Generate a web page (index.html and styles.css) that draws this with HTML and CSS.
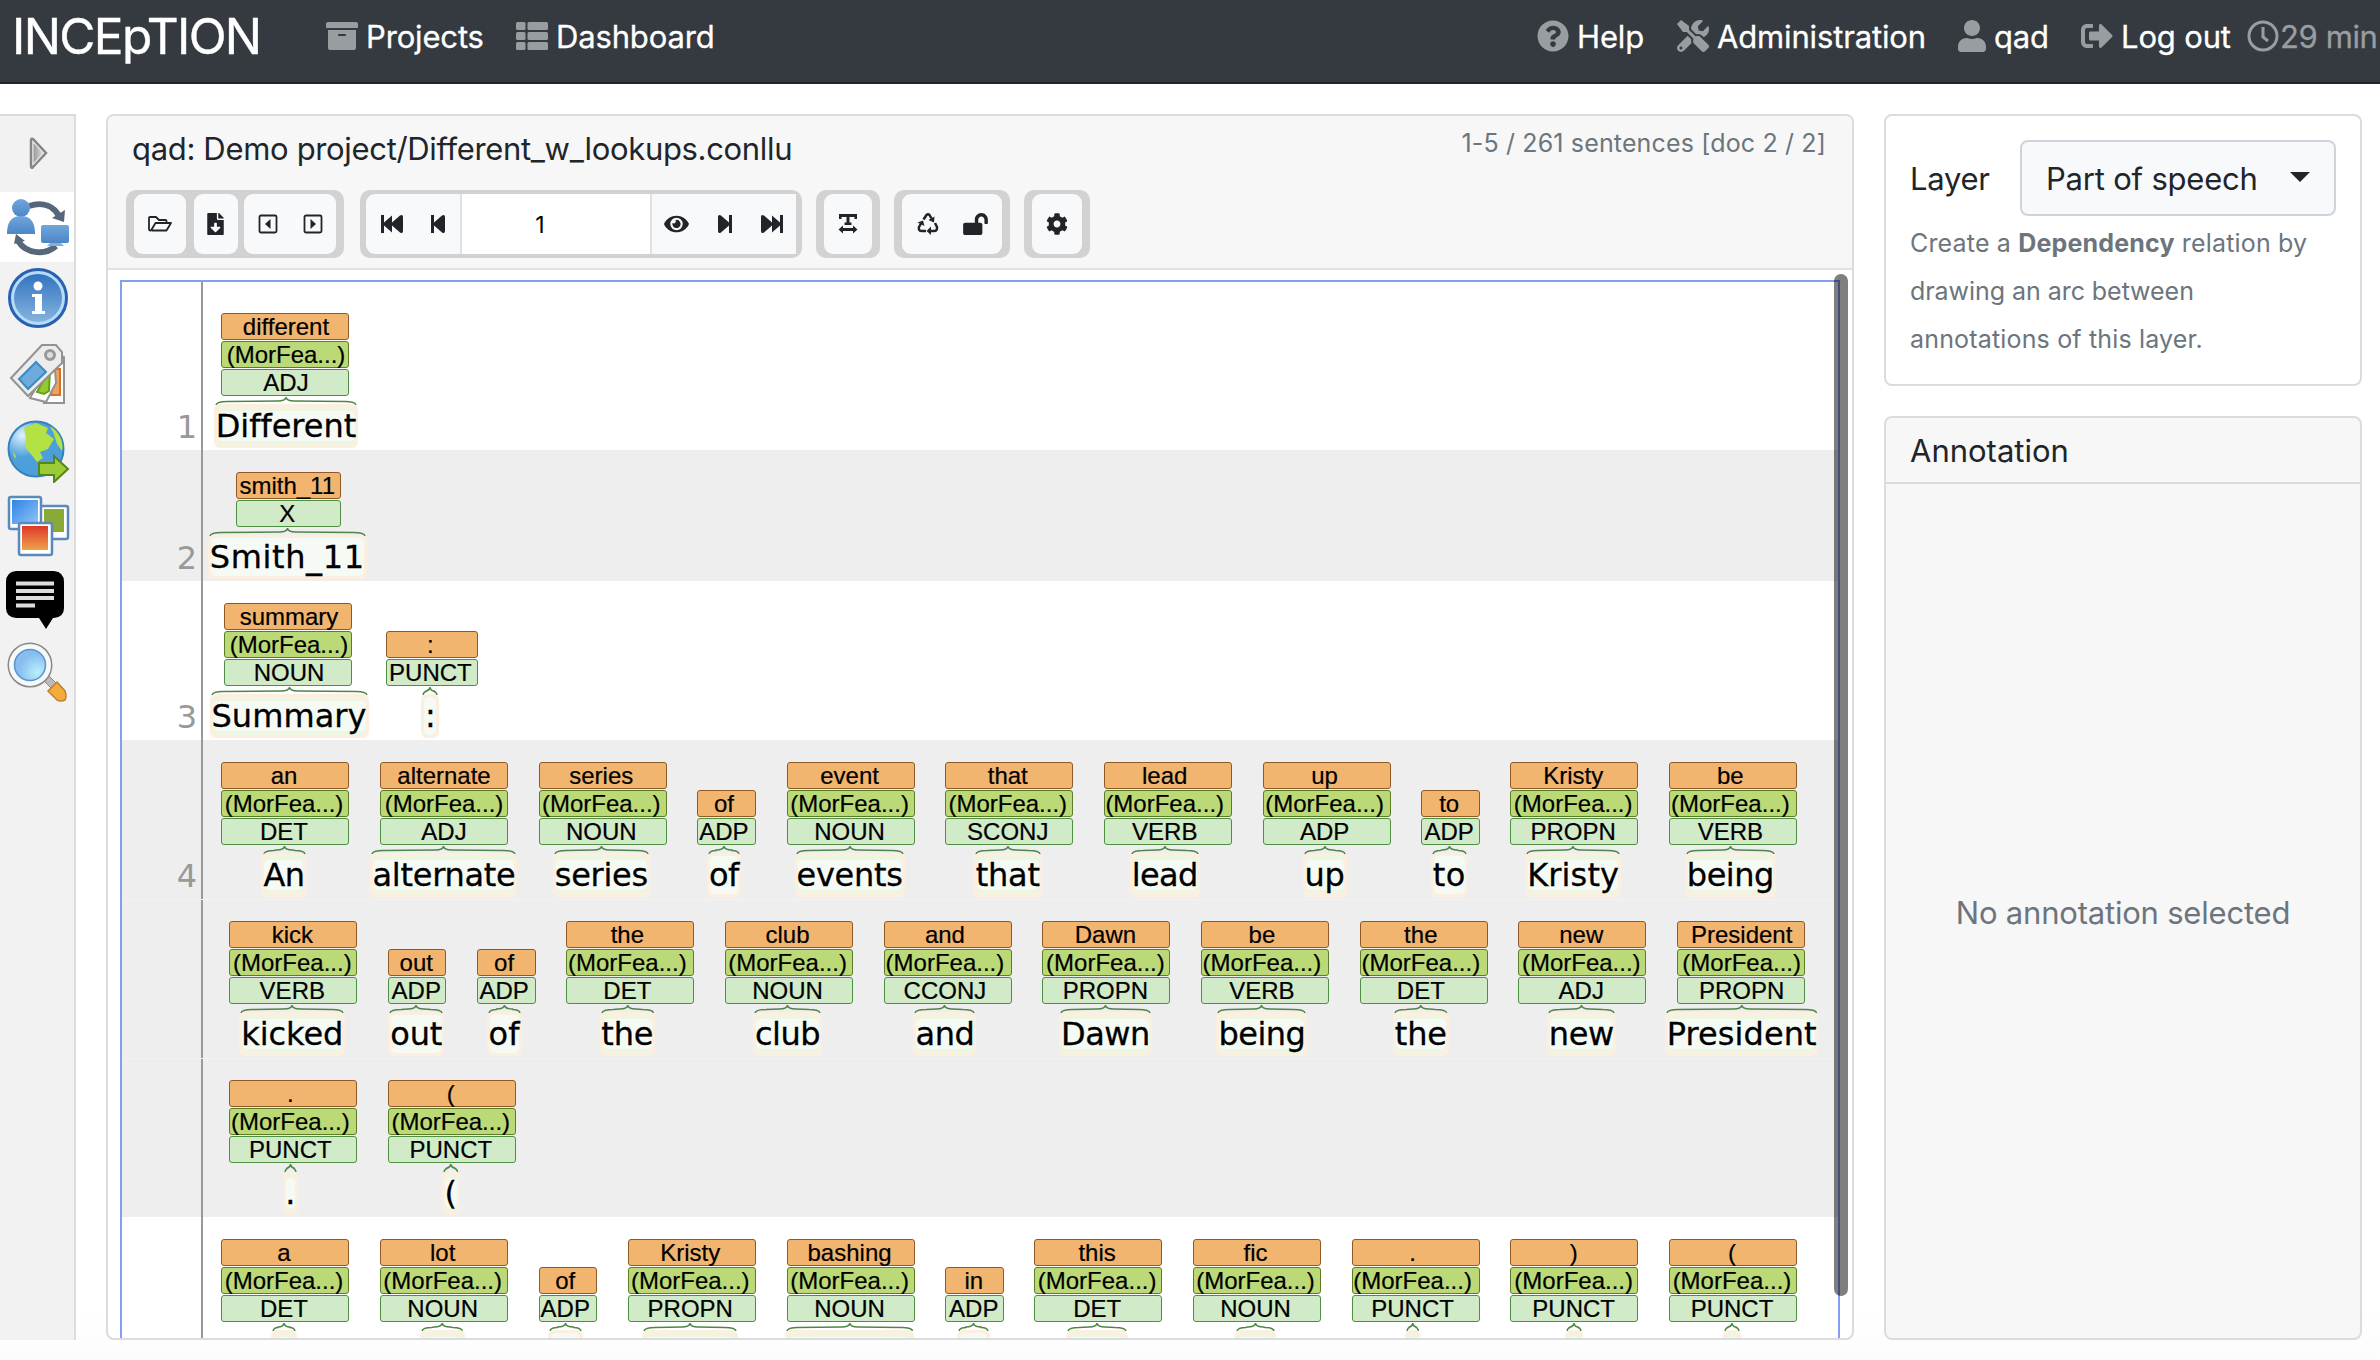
FILE: index.html
```html
<!DOCTYPE html>
<html lang="en">
<head>
<meta charset="utf-8">
<title>INCEpTION</title>
<link rel="stylesheet" href="styles.css">
</head>
<body>
<header class="navbar">
  <a class="brand">INCEpTION</a>
  <nav class="nav-main">
    <a class="nav-item projects"><svg width="32" height="32" viewBox="0 0 512 512"><path d="M32 448c0 17.700 14.300 32 32 32h384c17.700 0 32-14.300 32-32V160H32v288zm160-212c0-6.600 5.400-12 12-12h104c6.600 0 12 5.400 12 12v8c0 6.600-5.400 12-12 12H204c-6.600 0-12-5.400-12-12v-8zM480 32H32C14.300 32 0 46.300 0 64v48c0 8.800 7.200 16 16 16h480c8.800 0 16-7.200 16-16V64c0-17.700-14.300-32-32-32z"/></svg><span>Projects</span></a>
    <a class="nav-item dashboard"><svg width="32" height="32" viewBox="0 0 32 32"><rect x="0" y="2" width="9.500" height="8" rx="1.500"/><rect x="0" y="12" width="9.500" height="8" rx="1.500"/><rect x="0" y="22" width="9.500" height="8" rx="1.500"/><rect x="11.500" y="2" width="20.500" height="8" rx="1.500"/><rect x="11.500" y="12" width="20.500" height="8" rx="1.500"/><rect x="11.500" y="22" width="20.500" height="8" rx="1.500"/></svg><span>Dashboard</span></a>
  </nav>
  <nav class="nav-user">
    <a class="nav-item help"><svg width="32" height="32" viewBox="0 0 512 512"><path d="M504 256c0 136.997-111.043 248-248 248S8 392.997 8 256C8 119.083 119.043 8 256 8s248 111.083 248 248zM262.655 90c-54.497 0-89.255 22.957-116.549 63.758-3.536 5.286-2.353 12.415 2.715 16.258l34.699 26.310c5.205 3.947 12.621 3.008 16.665-2.122 17.864-22.658 30.113-35.797 57.303-35.797 20.429 0 45.698 13.148 45.698 32.958 0 14.976-12.363 22.667-32.534 33.976C247.128 238.528 216 254.941 216 296v4c0 6.627 5.373 12 12 12h56c6.627 0 12-5.373 12-12v-1.333c0-28.462 83.186-29.647 83.186-106.667 0-58.002-60.165-102-116.531-102zM256 338c-25.365 0-46 20.635-46 46 0 25.364 20.635 46 46 46s46-20.636 46-46c0-25.365-20.635-46-46-46z"/></svg><span>Help</span></a>
    <a class="nav-item admin"><svg width="32" height="32" viewBox="0 0 512 512"><path d="M501.100 395.700L384 278.600c-23.100-23.100-57.600-27.600-85.400-13.900L192 158.100V96L64 0 0 64l96 128h62.100l106.600 106.600c-13.600 27.800-9.200 62.300 13.900 85.400l117.100 117.100c14.600 14.600 38.200 14.600 52.700 0l52.700-52.700c14.500-14.600 14.500-38.200 0-52.700zM331.700 225c28.300 0 54.900 11 74.900 31l19.400 19.400c15.800-6.900 30.800-16.500 43.800-29.500 37.100-37.100 49.700-89.300 37.900-136.700-2.200-9-13.500-12.100-20.100-5.500l-74.400 74.400-67.900-11.300L334 98.900l74.400-74.400c6.600-6.600 3.400-17.900-5.700-20.200-47.400-11.700-99.600.900-136.600 37.900-28.500 28.500-41.900 66.100-41.200 103.600l82.100 82.100c8.100-1.900 16.500-2.900 24.700-2.900zm-103.900 82l-56.700-56.700L18.700 402.800c-25 25-25 65.500 0 90.500s65.500 25 90.500 0l123.600-123.600c-7.600-19.900-9.900-41.600-5-62.700zM64 472c-13.200 0-24-10.800-24-24 0-13.300 10.700-24 24-24s24 10.700 24 24c0 13.200-10.700 24-24 24z"/></svg><span>Administration</span></a>
    <a class="nav-item user"><svg width="28" height="32" viewBox="0 0 448 512"><path d="M224 256c70.700 0 128-57.300 128-128S294.700 0 224 0 96 57.300 96 128s57.300 128 128 128zm89.600 32h-16.700c-22.200 10.200-46.900 16-72.900 16s-50.600-5.800-72.900-16h-16.700C60.200 288 0 348.200 0 422.400V464c0 26.500 21.500 48 48 48h352c26.500 0 48-21.500 48-48v-41.600c0-74.200-60.200-134.400-134.400-134.400z"/></svg><span>qad</span></a>
    <a class="nav-item logout"><svg width="32" height="32" viewBox="0 0 512 512"><path d="M497 273L329 441c-15 15-41 4.500-41-17v-96H152c-13.300 0-24-10.700-24-24v-96c0-13.300 10.700-24 24-24h136V88c0-21.400 25.900-32 41-17l168 168c9.300 9.400 9.300 24.600 0 34zM192 436v-40c0-6.600-5.400-12-12-12H96c-17.700 0-32-14.300-32-32V160c0-17.700 14.300-32 32-32h84c6.600 0 12-5.400 12-12V76c0-6.600-5.400-12-12-12H96c-53 0-96 43-96 96v192c0 53 43 96 96 96h84c6.600 0 12-5.400 12-12z"/></svg><span>Log out</span></a>
    <span class="nav-item timer"><svg width="32" height="32" viewBox="0 0 32 32"><circle class="ln" cx="16" cy="16" r="14"/><path class="ln" d="M16 7v10l5 4"/></svg><span>29 min</span></span>
  </nav>
</header>

<main class="workspace">
  <aside class="sidebar">
    <a class="tool expand"><svg width="26" height="36" viewBox="0 0 26 36"><defs><linearGradient id="gArrow"><stop offset="0" stop-color="#999"/><stop offset="1" stop-color="#ddd"/></linearGradient></defs><path d="M5 4Q5 2 7 3L20 17L7 31Q5 33 5 30z" fill="#eee" stroke="#858585" stroke-width="2.500"/><path d="M7.500 7L17 17L7.500 27z" fill="url(#gArrow)"/></svg></a>
    <a class="tool active"><svg width="66" height="62" viewBox="0 0 66 62"><defs><linearGradient id="gBlue" x2="0" y2="1"><stop offset="0" stop-color="#71a6dc"/><stop offset="1" stop-color="#4c86c6"/></linearGradient></defs><g fill="none" stroke="#57667a" stroke-width="6"><path d="M25 9C40 4 50 10 55 19"/><path d="M14 44C23 58 42 58 52 49"/></g><path d="M48 21L60 25L61 13z M10 47L12 37L21 44z" fill="#57667a"/><circle cx="17" cy="11" r="9" fill="url(#gBlue)"/><path d="M3 37C3 22 10 19 17 19S31 22 31 37z" fill="url(#gBlue)"/><rect x="37" y="28" width="28" height="18" rx="2" fill="url(#gBlue)"/><path d="M46 46h11l3 3H43z" fill="#7fb0de"/></svg></a>
    <a class="tool"><svg width="64" height="64" viewBox="0 0 64 64"><defs><linearGradient id="gInfo" x2="0" y2="1"><stop offset="0" stop-color="#3274c0"/><stop offset="1" stop-color="#86b3df"/></linearGradient></defs><circle cx="32" cy="31" r="28.500" fill="#b5dcfa" stroke="#2a60b0" stroke-width="3"/><circle cx="32" cy="31" r="24" fill="url(#gInfo)"/><circle cx="32" cy="19" r="4.500" fill="#fff"/><path d="M26 27h10v17h3v3H26v-3h3V30h-3z" fill="#fff"/></svg></a>
    <a class="tool"><svg width="64" height="64" viewBox="0 0 64 64"><g stroke="#929292" stroke-width="2"><path d="M50 10L58 14V60L38 60z" fill="#fff"/><path d="M48 26h6v26h-9z" fill="#f0a35c" stroke="#d9702a"/><path d="M48 14L50 40L40 59L24 55z" fill="#fff"/><path d="M44 26L43 48L38 51L31 49z" fill="#93c92f" stroke="#679f18"/><path d="M36 2H50L56 9V20L22 53L5 35z" fill="#ececec"/></g><path d="M30 19L40 29L22 46L13 36z" fill="#6cabdb" stroke="#3a8bc2" stroke-width="2"/><circle cx="44" cy="12" r="4.500" fill="#ddd" stroke="#999" stroke-width="3"/></svg></a>
    <a class="tool"><svg width="64" height="64" viewBox="0 0 64 64"><defs><radialGradient id="gGlobe" cx=".25" cy=".25"><stop offset="0" stop-color="#e0f2ff"/><stop offset=".8" stop-color="#4d9fdc"/></radialGradient></defs><circle cx="30" cy="30" r="27.500" fill="url(#gGlobe)" stroke="#3682bd" stroke-width="2"/><path d="M18 9L30 4L42 9L40 14L48 20L42 30L34 33L37 39L31 43L24 34L19 28L20 19z M44 7C54 13 58 24 56 32L51 25L48 15z M6 32L10 37L9 40z" fill="#b4e144"/><path d="M33 44H48V37L62 50L48 63V56H33z" fill="#9ccc35" stroke="#55851c" stroke-width="2"/></svg></a>
    <a class="tool"><svg width="64" height="64" viewBox="0 0 64 64"><defs><linearGradient id="gP1" x2="1" y2="1"><stop offset="0" stop-color="#2d85e6"/><stop offset="1" stop-color="#91c3f5"/></linearGradient><linearGradient id="gP3" x2="0" y2="1"><stop offset="0" stop-color="#dd3826"/><stop offset="1" stop-color="#efa24c"/></linearGradient></defs><g fill="#fff" stroke="#5a8abc" stroke-width="2.500"><rect x="31" y="11" width="31" height="33" rx="2"/><rect x="3" y="2" width="32" height="32" rx="2"/></g><rect x="38" y="14" width="20" height="23" fill="#89ab35"/><rect x="6" y="5" width="26" height="24" fill="url(#gP1)"/><rect x="13" y="28" width="33" height="32" rx="2" fill="#fff" stroke="#5a8abc" stroke-width="2.500"/><rect x="16" y="31" width="26" height="24" fill="url(#gP3)"/></svg></a>
    <a class="tool short"><svg width="64" height="64" viewBox="0 0 64 64"><path d="M10 0H48Q58 1 58 11V37Q58 46 48 47H47L40 58L33 47H10Q0 46 0 37V11Q0 1 10 0z" fill="#000"/><path d="M10 12.500H48M10 20H48M10 27H48M10 34.500H29" stroke="#ddd" stroke-width="4"/></svg></a>
    <a class="tool"><svg width="64" height="64" viewBox="0 0 64 64"><defs><radialGradient id="gLens" cx=".7" cy=".7"><stop offset="0" stop-color="#b9f0fb"/><stop offset="1" stop-color="#88bdf0"/></radialGradient></defs><path d="M38 39L43 34L51 42L46 47z" fill="#bbb" stroke="#888"/><path d="M45 46L51 40L59 49Q61 54 59 58Q55 60 51 58L42 49z" fill="#f4ab3e" stroke="#bf8127" stroke-width="1.500"/><circle cx="24" cy="23" r="20" fill="none" stroke="#888" stroke-width="5"/><circle cx="24" cy="23" r="18.500" fill="url(#gLens)" stroke="#f8f8f8" stroke-width="5"/><circle cx="24" cy="23" r="15.500" fill="none" stroke="#5796d1" stroke-width="1.500"/></svg></a>
  </aside>

  <section class="editor">
    <div class="editor-head">
      <div class="doc-line">
        <span class="doc-title">qad: Demo project/Different_w_lookups.conllu</span>
        <span class="doc-pos">1-5 / 261 sentences [doc 2 / 2]</span>
      </div>
      <div class="toolbar">
        <div class="group g-doc">
          <button class="btn w52"><svg width="26" height="20" viewBox="0 0 26 20"><path class="st" d="M5 16.500H19.500L24 9H8.500L4 16.500H3Q2 16.500 2 15V4Q2 3 3 3H9L12 6H18.500Q19.500 6 19.500 7V9"/></svg></button>
          <button class="btn w44"><svg width="17" height="22" viewBox="0 0 384 512"><path d="M224 136V0H24C10.700 0 0 10.700 0 24v464c0 13.300 10.700 24 24 24h336c13.300 0 24-10.700 24-24V160H248c-13.200 0-24-10.800-24-24zm76.450 211.360l-96.420 95.700c-6.650 6.610-17.390 6.610-24.040 0l-96.420-95.700C73.420 337.290 80.540 320 94.820 320H160v-80c0-8.840 7.160-16 16-16h32c8.840 0 16 7.160 16 16v80h65.180c14.280 0 21.400 17.290 11.270 27.360zM377 105L279.100 7c-4.500-4.500-10.600-7-17-7H256v128h128v-6.100c0-6.300-2.500-12.400-7-16.900z"/></svg></button>
          <span class="btn pair"><svg width="20" height="20" viewBox="0 0 20 20"><rect class="st" x="1.500" y="1.500" width="17" height="17" rx="1.500"/><path d="M12.500 5V15L7 10z"/></svg><svg width="20" height="20" viewBox="0 0 20 20"><rect class="st" x="1.500" y="1.500" width="17" height="17" rx="1.500"/><path d="M7.500 5V15L13 10z"/></svg></span>
        </div>
        <div class="group g-page">
          <span class="btn back"><svg width="24" height="20" viewBox="0 0 24 20"><path d="M1 1h3v7.500L12 1.500V8.500L20 1.500Q23 0 23 3V17Q23 20 20 18.500L12 11.500V18.500L4 11.500V19H1z"/></svg><svg width="16" height="20" viewBox="0 0 16 20"><path d="M1 1h3v7.500L12 1.500Q15 0 15 3V17Q15 20 12 18.500L4 11.500V19H1z"/></svg></span>
          <span class="page-input">1</span>
          <span class="btn forward"><svg width="25" height="22" viewBox="0 0 576 512"><path d="M572.520 241.400C518.290 135.590 410.930 64 288 64S57.680 135.640 3.480 241.410a32.350 32.350 0 0 0 0 29.190C57.710 376.410 165.070 448 288 448s230.320-71.640 284.520-177.410a32.350 32.350 0 0 0 0-29.190zM288 400a144 144 0 1 1 144-144 143.930 143.930 0 0 1-144 144zm0-240a95.310 95.310 0 0 0-25.310 3.790 47.850 47.850 0 0 1-66.900 66.900A95.780 95.780 0 1 0 288 160z"/></svg><svg width="16" height="20" viewBox="0 0 16 20"><path d="M15 1h-3v7.500L4 1.500Q1 0 1 3V17Q1 20 4 18.500L12 11.500V19H15z"/></svg><svg width="24" height="20" viewBox="0 0 24 20"><path d="M23 1h-3v7.500L12 1.500V8.500L4 1.500Q1 0 1 3V17Q1 20 4 18.500L12 11.500V18.500L20 11.500V19H23z"/></svg></span>
        </div>
        <div class="group g-text"><button class="btn w48"><svg width="20" height="20" viewBox="0 0 20 20"><path d="M1 0H19V5H16.500V3H11.500V8.500H13.500V11H6.500V8.500H8.500V3H3.500V5H1z M5 11.500V14H15V11.500L19.500 15.500L15 19.500V17H5V19.500L.500 15.500z"/></svg></button></div>
        <div class="group g-state"><span class="btn w100"><svg width="22" height="22" viewBox="0 0 22 22"><g class="st thick"><path d="M6.500 6.500L9.500 2Q11 .500 12.500 2L14.500 5.500"/><path d="M18 10L20 14Q20.500 18 17 18H13"/><path d="M9 18H5Q1 18 2 14L4 10.500"/></g><path d="M17.500 3.500L17 9.500L11.500 7z M14 13.500V22L9.500 18z M.500 9.500L6 7.500L7.500 13z"/></svg><svg width="25" height="22" viewBox="0 0 576 512"><path d="M423.500 0C339.500.300 272 69.500 272 153.500V224H48c-26.500 0-48 21.500-48 48v192c0 26.500 21.500 48 48 48h352c26.500 0 48-21.500 48-48V272c0-26.500-21.500-48-48-48h-48v-71.100c0-39.600 31.700-72.500 71.300-72.900 40-.400 72.700 32.100 72.700 72v80c0 13.300 10.700 24 24 24h32c13.300 0 24-10.700 24-24v-80C576 68 507.500-.300 423.500 0z"/></svg></span></div>
        <div class="group g-prefs"><button class="btn w50"><svg width="22" height="22" viewBox="0 0 512 512"><path d="M487.400 315.700l-42.600-24.600c4.300-23.200 4.300-47 0-70.200l42.600-24.600c4.900-2.800 7.100-8.600 5.500-14-11.100-35.600-30-67.800-54.700-94.600-3.800-4.100-10-5.100-14.800-2.300L380.800 110c-17.900-15.400-38.500-27.300-60.800-35.100V25.800c0-5.600-3.900-10.500-9.400-11.700-36.700-8.200-74.300-7.800-109.200 0-5.500 1.200-9.400 6.100-9.400 11.700V75c-22.200 7.900-42.800 19.800-60.800 35.100L88.700 85.500c-4.900-2.800-11-1.900-14.800 2.300-24.700 26.700-43.600 58.900-54.700 94.600-1.700 5.400.600 11.200 5.500 14L67.300 221c-4.300 23.200-4.300 47 0 70.200l-42.600 24.600c-4.900 2.800-7.100 8.600-5.500 14 11.100 35.600 30 67.800 54.700 94.600 3.800 4.100 10 5.100 14.800 2.300l42.600-24.600c17.900 15.400 38.500 27.300 60.800 35.100v49.200c0 5.600 3.900 10.500 9.400 11.700 36.700 8.200 74.300 7.800 109.200 0 5.500-1.200 9.400-6.100 9.400-11.700v-49.200c22.200-7.900 42.800-19.800 60.800-35.100l42.600 24.600c4.900 2.800 11 1.900 14.800-2.300 24.700-26.700 43.600-58.900 54.700-94.600 1.500-5.500-.700-11.300-5.600-14.100zM256 336c-44.100 0-80-35.900-80-80s35.900-80 80-80 80 35.900 80 80-35.900 80-80 80z"/></svg></button></div>
      </div>
    </div>
    <div class="editor-body">
      <div class="annotations" id="annotations"></div>
      <div class="scrollbar"></div>
    </div>
  </section>

  <aside class="details">
    <section class="card layer-card">
      <div class="layer-row"><span class="layer-label">Layer</span><button class="select"><span>Part of speech</span><svg width="20" height="10" viewBox="0 0 20 10"><path d="M0 0H20L10 10z"/></svg></button></div>
      <p class="hint">Create a <b>Dependency</b> relation by<br><span class="l2">drawing an arc between</span><br>annotations of this layer.</p>
    </section>
    <section class="card annotation-card">
      <h2>Annotation</h2>
      <div class="empty"><span>No annotation selected</span></div>
    </section>
  </aside>
</main>
<script src="annotations.js"></script>
</body>
</html>
```
FILE: styles.css
```css
* { box-sizing: border-box; }
body {
  margin: 0;
  height: 1360px;
  display: flex;
  flex-direction: column;
  overflow: hidden;
  background: #fff;
  color: #212529;
  font-family: Inter, "Liberation Sans", sans-serif;
  font-size: 31px;
}
svg { display: block; flex: none; }

/* Navigation */
.navbar {
  flex: none;
  display: flex;
  align-items: flex-start;
  height: 84px;
  background: #343a40;
  border-bottom: 2px solid #212529;
  color: #fff;
  white-space: nowrap;
}
.brand {
  width: 326px;
  padding-left: 12px;
  font-size: 49.500px;
  line-height: 72px;
  letter-spacing: -1.650px;
  -webkit-text-stroke: .4px;
}
.nav-main, .nav-user { display: flex; height: 72px; }
.nav-user { margin-left: auto; }
.nav-item { display: flex; align-items: center; gap: 8px; letter-spacing: -.15px; -webkit-text-stroke: .3px; }
.nav-item svg { fill: #9a9da0; }
.nav-item svg .ln { fill: none; stroke: #9a9da0; stroke-width: 3; }
.projects { width: 190px; }
.help { width: 140px; }
.admin { width: 281px; }
.user { width: 123px; }
.logout { width: 166px; }
.timer { width: 133px; gap: 1px; color: #9a9da0; letter-spacing: -.4px; }

/* Workspace */
.workspace {
  flex: 1;
  display: grid;
  grid-template-columns: 76px 1748px 478px;
  column-gap: 30px;
  padding-top: 30px;
  padding-bottom: 20px;
  background: linear-gradient(#fff 96%, #fcfcfc);
}
.sidebar {
  display: flex;
  flex-direction: column;
  background: #f2f2f2;
  border-top: 2px solid #dcdcdc;
  border-right: 2px solid #dcdcdc;
}
.tool { height: 76px; padding: 4px 0 0 6px; }
.tool.short { height: 71px; }
.tool.expand { height: 76px; padding: 20px 0 0 26px; }
.tool.active { height: 70px; background: #fff; padding-top: 5px; margin-bottom: 1px; padding-left: 4px; }

/* Editor */
.editor {
  display: flex;
  flex-direction: column;
  min-height: 0;
  height: 1226px;
  overflow: hidden;
  border: 2px solid #dcdcdc;
  border-radius: 8px;
  background: #fff;
}
.editor-head {
  flex: none;
  height: 154px;
  background: #f7f7f7;
  border-bottom: 2px solid #dee2e6;
}
.doc-line {
  display: flex;
  justify-content: space-between;
  height: 74px;
  padding: 14px 26px 0 24px;
  white-space: nowrap;
}
.doc-title { line-height: 38px; letter-spacing: -.33px; }
.doc-pos { font-size: 25px; line-height: 27px; letter-spacing: .15px; color: #6c757d; }
.toolbar { display: flex; padding-left: 18px; }
.group {
  display: flex;
  height: 68px;
  padding: 4px 8px;
  background: #d2d2d2;
  border-radius: 10px;
}
.g-doc { gap: 8px; margin-right: 16px; }
.g-doc .pair { margin-left: -2px; }
.g-page { padding: 4px 6px; margin-right: 14px; }
.g-text { margin-right: 14px; }
.g-state { margin-right: 14px; }
.btn {
  display: flex;
  align-items: center;
  justify-content: center;
  padding: 0;
  border: 0;
  border-radius: 9px;
  background: #f8f9fb;
}
.btn svg { fill: #212529; }
.btn .st { fill: none; stroke: #212529; stroke-width: 1.800; stroke-linejoin: round; }
.btn .thick { stroke-width: 2.500; }
.w52 { width: 52px; }
.w44 { width: 44px; padding-right: 2px; }
.w48 { width: 48px; }
.w50 { width: 50px; }
.w100 { width: 100px; gap: 24px; }
.pair { width: 92px; gap: 25px; }
.back { width: 96px; gap: 26px; border-right: 2px solid #dee2e6; border-radius: 9px 0 0 9px; }
.page-input {
  width: 188px;
  line-height: 62px;
  text-align: center;
  padding-right: 32px;
  font-size: 23px;
  color: #000;
  background: #fff;
}
.forward { width: 146px; gap: 27.500px; border-left: 2px solid #dee2e6; border-radius: 0; }

.editor-body { display: grid; flex: 1; min-height: 0; padding: 4px 4px 0 12px; }
.annotations, .scrollbar { grid-area: 1 / 1; }
.annotations {
  width: 1720px;
  margin-top: 6px;
  height: 1060px;
  overflow: hidden;
  border: 2px solid #869df6;
  border-bottom: 0;
}
.scrollbar {
  justify-self: end;
  width: 14px;
  height: 1022px;
  border-radius: 7px;
  background: rgba(0, 0, 0, .5);
  z-index: 1;
}

/* Annotated sentences */
.line { display: flex; background: #fff; }
.line.shade { background: #eee; }
.line.cont { border-top: 1px solid #f2f2f2; }
.num {
  flex: none;
  width: 81px;
  padding-right: 4px;
  border-right: 2px solid #999;
  color: #999;
  font: 32px/38px "DejaVu Sans", sans-serif;
  display: flex;
  align-items: flex-end;
  justify-content: flex-end;
  padding-bottom: 4px;
}
.tokens { display: flex; align-items: flex-end; gap: 30.700px; padding-bottom: 2px; }
.tok { flex: none; display: flex; flex-direction: column; align-items: center; }
.lab {
  width: 100%;
  height: 27px;
  margin-bottom: 1px;
  border: 1.500px solid;
  border-radius: 3px;
  display: flex;
  justify-content: center;
  color: #000;
  font: 24px/25px "Liberation Sans", Arial, sans-serif;
  -webkit-text-stroke: .2px;
  white-space: nowrap;
}
.lemma { background: #f2b570; border-color: #8f5a26; }
.morph { background: #bbda77; border-color: #5c7c28; }
.pos { background: #d1eac8; border-color: #4e8f42; }
.brace { margin: 0 0 -1px; fill: none; stroke: #4e8745; stroke-width: 1.500; }
.word {
  display: flex;
  height: 44px;
  padding: 3px;
  border-radius: 6px;
  background: #fdefe0;
  flex: none;
}
.word .mid { display: flex; width: 100%; padding: 4px 0; border-radius: 4px; background: #eef5e0; }
.word .mid.plain { padding: 0; }
.word .txt {
  width: 100%;
  display: flex;
  justify-content: center;
  align-items: center;
  border-radius: 5px;
  background: #f5faf5;
  color: #000;
  font: 32px/30px "DejaVu Sans", Verdana, sans-serif;
  -webkit-text-stroke: .3px;
  white-space: nowrap;
}

/* Detail panels */
.details { display: flex; flex-direction: column; gap: 30px; min-height: 0; height: 1226px; }
.card { border: 2px solid #dcdcdc; border-radius: 8px; overflow: hidden; }
.layer-card { flex: none; height: 272px; padding: 24px 24px 0; }
.layer-row { display: flex; align-items: center; justify-content: space-between; }
.layer-label { letter-spacing: -.3px; padding-top: 1px; }
.select {
  display: flex;
  align-items: center;
  justify-content: space-between;
  width: 316px;
  height: 76px;
  padding: 1px 24px 0;
  border: 2px solid #ced4da;
  border-radius: 8px;
  background: #f8f9fb;
  color: #212529;
  font: inherit;
  letter-spacing: -.2px;
}
.select svg { margin-top: -3px; fill: #212529; }
.hint {
  margin: 3px 0 0;
  font-size: 25px;
  line-height: 48px;
  letter-spacing: .17px;
  color: #6c757d;
  white-space: nowrap;
}
.hint .l2 { letter-spacing: -.05px; }
.annotation-card { flex: 1; display: flex; flex-direction: column; background: #f7f7f7; }
.annotation-card h2 {
  margin: 0;
  height: 66px;
  padding: 0 24px;
  border-bottom: 2px solid #dcdcdc;
  font-size: 31px;
  font-weight: 400;
  line-height: 65px;
}
.empty { flex: 1; display: flex; align-items: center; justify-content: center; padding-top: 2px; color: #6c757d; letter-spacing: -.2px; }
```
FILE: annotations.js
```js
// Token: [text, lemma, POS, has morphology, highlight width, offset of the text centre, box width]
const lines = [
  { n: 1, h: 168, x: 18.3, t: [["Different", "different", "ADJ", 1, 144, 0.7]] },
  { n: 2, h: 131, x: 33.3, shade: 1, t: [["Smith_11", "smith_11", "X", 0, 159, -1.6, 105]] },
  { n: 3, h: 159, x: 21.3, gap: 33.4, t: [["Summary", "summary", "NOUN", 1, 159, 0.7], [":", ":", "PUNCT", 0, 18, -1.3, 92]] },
  { n: 4, h: 159, x: 18.3, shade: 1, t: [
    ["An", "an", "DET", 1, 45, -1.3], ["alternate", "alternate", "ADJ", 1, 147, 0], ["series", "series", "NOUN", 1, 97, -1.4],
    ["of", "of", "ADP", 0, 34, -2.7], ["events", "event", "NOUN", 1, 110, -1], ["that", "that", "SCONJ", 1, 68, -1.5],
    ["lead", "lead", "VERB", 1, 70, -3.2], ["up", "up", "ADP", 1, 44, -2], ["to", "to", "ADP", 0, 37, -1.4],
    ["Kristy", "Kristy", "PROPN", 1, 96, -1.3], ["being", "be", "VERB", 1, 91, -2.8]] },
  { h: 159, x: 26.3, shade: 1, cont: 1, t: [
    ["kicked", "kick", "VERB", 1, 106, -1], ["out", "out", "ADP", 0, 56, -1], ["of", "of", "ADP", 0, 35, -2.3],
    ["the", "the", "DET", 1, 55.6, -3], ["club", "club", "NOUN", 1, 69, -1.5], ["and", "and", "CCONJ", 1, 63, -2.8],
    ["Dawn", "Dawn", "PROPN", 1, 93, -1], ["being", "be", "VERB", 1, 91, -3.2], ["the", "the", "DET", 1, 55.6, -3],
    ["new", "new", "ADJ", 1, 69, -1.2], ["President", "President", "PROPN", 1, 153.6, 0.5]] },
  { h: 159, x: 26.3, shade: 1, cont: 1, t: [[".", ".", "PUNCT", 1, 15, -3], ["(", "(", "PUNCT", 1, 17.6, -1.2]] },
  // Still below the fold: only the labels and the tops of the highlights are visible
  { h: 159, x: 18.3, t: [
    ["", "a", "DET", 1, 26, -1.3], ["", "lot", "NOUN", 1, 44.4, -1.3], ["", "of", "ADP", 0, 35, -2.7],
    ["", "Kristy", "PROPN", 1, 96, -1.6], ["", "bashing", "NOUN", 1, 129.6, -1], ["", "in", "ADP", 0, 33, -0.7],
    ["", "this", "DET", 1, 62, -1.3], ["", "fic", "NOUN", 1, 41, -1.6], ["", ".", "PUNCT", 1, 15.5, -3.2],
    ["", ")", "PUNCT", 1, 18, -0.8], ["", "(", "PUNCT", 1, 18, -1.2]] }
];

function label(kind, text, shift) {
  return `<div class="lab ${kind}" style="padding-right:${Math.max(0, -2 * shift)}px;padding-left:${Math.max(0, 2 * shift)}px">${text}</div>`;
}

function brace(w) {
  const c = w / 2, k = Math.min(12, w / 4), p = Math.min(8, w / 4);
  return `<path d="M1 8Q2 4.5 ${k} 4.500L${c - p} 4Q${c - 1} 4 ${c} .500Q${c + 1} 4 ${c + p} 4L${w - k} 4.500Q${w - 2} 4.500 ${w - 1} 8"/>`;
}

function token([text, lemma, pos, morph, width, shift, box]) {
  const w = box || (morph ? 128 : 58.5);
  const side = (w - width) / 2;
  const bw = width - 2;
  return `<div class="tok" style="width:${w}px">
    ${label("lemma", lemma, shift)}${morph ? label("morph", "(MorFea...)", shift) : ""}${label("pos", pos, shift)}
    <svg class="brace" style="margin-left:${2 * shift}px" width="${bw}" height="8">${brace(bw)}</svg>
    <div class="word" style="width:${width}px;margin-left:${side + shift}px;margin-right:${side - shift}px"><div class="mid${morph ? "" : " plain"}"><span class="txt"><span>${text}</span></span></div></div>
  </div>`;
}

const root = document.getElementById("annotations");
root.innerHTML = lines.map(l => `<div class="line${l.shade ? " shade" : ""}${l.cont ? " cont" : ""}" style="height:${l.h}px">
  <div class="num"><span>${l.n ? l.n : ""}</span></div>
  <div class="tokens" style="padding-left:${l.x}px${l.gap ? `;gap:${l.gap}px` : ""}">${l.t.map(token).join("")}</div></div>`).join("");

// Spread each word over its highlight
root.querySelectorAll(".txt > span").forEach(s => {
  const n = s.textContent.length;
  if (n < 2) return;
  const target = s.closest(".word").offsetWidth - 4;
  s.style.letterSpacing = (target - s.getBoundingClientRect().width) / n + "px";
});
```
